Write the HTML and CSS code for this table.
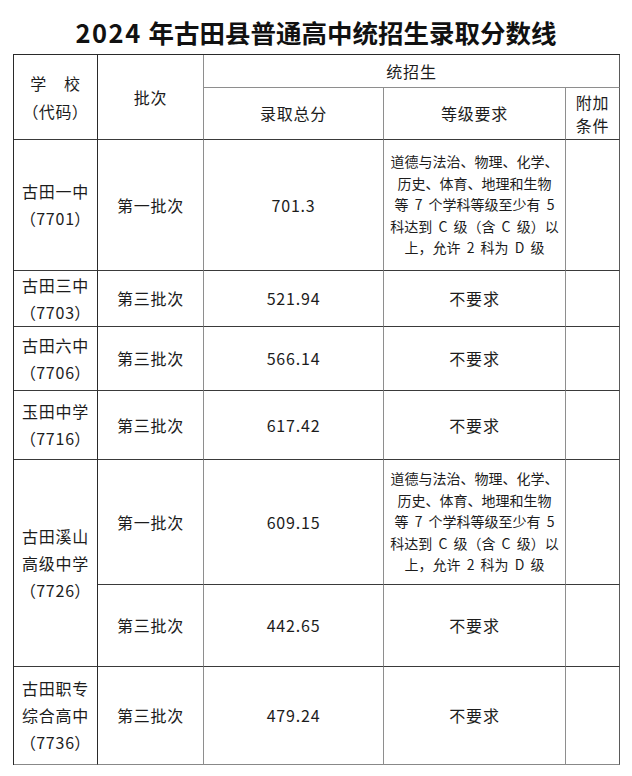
FILE: index.html
```html
<!DOCTYPE html>
<html lang="zh-CN">
<head>
<meta charset="utf-8">
<title>2024年古田县普通高中统招生录取分数线</title>
<link rel="stylesheet" href="styles.css">
</head>
<body>
<h1 class="title"><span class="yr">2024</span> 年古田县普通高中统招生录取分数线</h1>
<div class="grid">
  <div class="c c1 hschool"><span>学　校</span><span class="p">（代码）</span></div>
  <div class="c c2 hbatch">批次</div>
  <div class="c c5 hgroup">统招生</div>
  <div class="c c3">录取总分</div>
  <div class="c c4">等级要求</div>
  <div class="c c5 extra"><span>附加</span><span>条件</span></div>

  <div class="c c1"><span>古田一中</span><span class="p">（7701）</span></div>
  <div class="c c2">第一批次</div>
  <div class="c c3">701.3</div>
  <div class="c c4 req">道德与法治、物理、化学、<br>历史、体育、地理和生物<br>等 7 个学科等级至少有 5<br>科达到 C 级（含 C 级）以<br>上，允许 2 科为 D 级</div>
  <div class="c c5"></div>

  <div class="c c1"><span>古田三中</span><span class="p">（7703）</span></div>
  <div class="c c2">第三批次</div>
  <div class="c c3">521.94</div>
  <div class="c c4">不要求</div>
  <div class="c c5"></div>

  <div class="c c1"><span>古田六中</span><span class="p">（7706）</span></div>
  <div class="c c2">第三批次</div>
  <div class="c c3">566.14</div>
  <div class="c c4">不要求</div>
  <div class="c c5"></div>

  <div class="c c1"><span>玉田中学</span><span class="p">（7716）</span></div>
  <div class="c c2">第三批次</div>
  <div class="c c3">617.42</div>
  <div class="c c4">不要求</div>
  <div class="c c5"></div>

  <div class="c c1 span2"><span>古田溪山</span><span>高级中学</span><span class="p">（7726）</span></div>
  <div class="c c2">第一批次</div>
  <div class="c c3">609.15</div>
  <div class="c c4 req">道德与法治、物理、化学、<br>历史、体育、地理和生物<br>等 7 个学科等级至少有 5<br>科达到 C 级（含 C 级）以<br>上，允许 2 科为 D 级</div>
  <div class="c c5"></div>

  <div class="c c2">第三批次</div>
  <div class="c c3">442.65</div>
  <div class="c c4">不要求</div>
  <div class="c c5"></div>

  <div class="c c1 last"><span>古田职专</span><span>综合高中</span><span class="p">（7736）</span></div>
  <div class="c c2 last">第三批次</div>
  <div class="c c3 last">479.24</div>
  <div class="c c4 last">不要求</div>
  <div class="c c5 last"></div>
</div>
</body>
</html>
```

FILE: styles.css
```css
html, body {
  margin: 0;
  padding: 0;
  background: #ffffff;
}

body {
  font-family: "Noto Sans CJK SC", "Noto Sans", sans-serif;
  color: #1c1c1c;
}

.title {
  margin: 0;
  height: 54px;
  box-sizing: border-box;
  padding-top: 10px;
  line-height: 44px;
  text-align: center;
  font-size: 25.5px;
  font-weight: 700;
  color: #111111;
  white-space: nowrap;
  word-spacing: 1px;
}

.yr {
  letter-spacing: 1.5px;
}

.grid {
  display: grid;
  grid-template-columns: 84px 106px 180px 182px 54px;
  grid-template-rows: 33px 52px 131px 56px 64px 69px 125px 82px 98px;
  width: max-content;
  margin-left: 13px;
  border-left: 1px solid #2a2a2a;
  border-top: 1px solid #2a2a2a;
}

.c {
  display: flex;
  flex-direction: column;
  align-items: center;
  justify-content: center;
  text-align: center;
  font-size: 16px;
  letter-spacing: 0.8px;
  line-height: 27px;
  white-space: nowrap;
  border-right: 1px solid #8e8e8e;
  border-bottom: 1px solid #3a3a3a;
}

.c1 {
  border-right-color: #2a2a2a;
}

.c5 {
  border-right-color: #5a5a5a;
}

.hschool {
  grid-row: span 2;
  line-height: 28px;
}

.hbatch {
  grid-row: span 2;
}

.hgroup {
  grid-column: span 3;
  border-bottom-color: #8e8e8e;
}

.extra {
  line-height: 23px;
}

.span2 {
  grid-row: span 2;
}

.p {
  font-feature-settings: "palt" 1;
}

.req {
  font-size: 14px;
  letter-spacing: 0;
  line-height: 21.5px;
  word-spacing: 3px;
}

.last {
  border-bottom-color: #888888;
}
```
